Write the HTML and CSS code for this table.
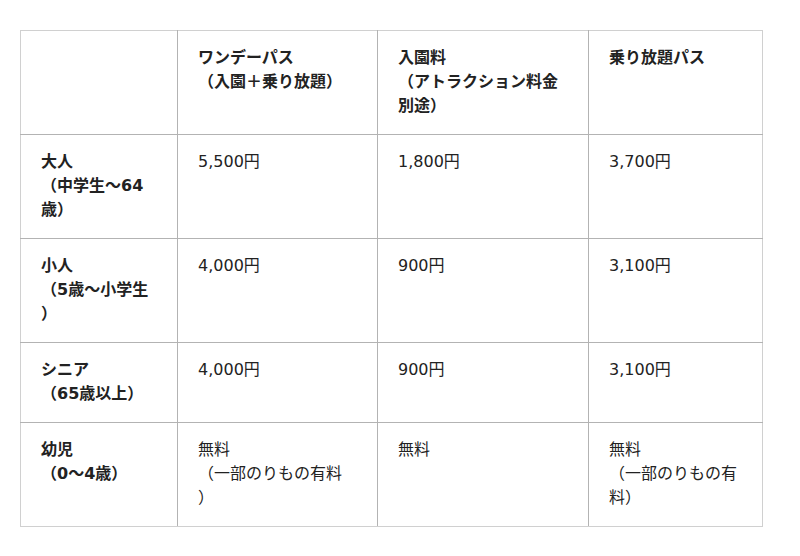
FILE: index.html
```html
<!DOCTYPE html>
<html lang="ja">
<head>
<meta charset="utf-8">
<title>料金表</title>
<link rel="stylesheet" href="styles.css">
</head>
<body>
<div class="page">
<table class="price-table">
  <colgroup>
    <col class="c1"><col class="c2"><col class="c3"><col class="c4">
  </colgroup>
  <thead>
    <tr>
      <th></th>
      <th>ワンデーパス<br>（入園＋乗り放題）</th>
      <th>入園料<br>（アトラクション料金別途）</th>
      <th>乗り放題パス</th>
    </tr>
  </thead>
  <tbody>
    <tr>
      <th>大人<br>（中学生〜64歳）</th>
      <td>5,500円</td>
      <td>1,800円</td>
      <td>3,700円</td>
    </tr>
    <tr>
      <th>小人<br>（5歳〜小学生）</th>
      <td>4,000円</td>
      <td>900円</td>
      <td>3,100円</td>
    </tr>
    <tr>
      <th>シニア<br>（65歳以上）</th>
      <td>4,000円</td>
      <td>900円</td>
      <td>3,100円</td>
    </tr>
    <tr>
      <th>幼児<br>（0〜4歳）</th>
      <td>無料<br>（一部のりもの有料）</td>
      <td>無料</td>
      <td>無料<br>（一部のりもの有料）</td>
    </tr>
  </tbody>
</table>
</div>
</body>
</html>
```

FILE: styles.css
```css
html, body {
  margin: 0;
  padding: 0;
  background: #ffffff;
}
.page {
  padding: 30px 20px;
}
.price-table {
  border-collapse: collapse;
  table-layout: fixed;
  width: 742px;
  font-family: "DejaVu Sans", "Noto Sans CJK JP", sans-serif;
  font-size: 16px;
  line-height: 24px;
  color: #222;
  text-spacing-trim: space-all;
}
.c1 { width: 157px; }
.c2 { width: 200px; }
.c3 { width: 211px; }
.c4 { width: 174px; }
.price-table th,
.price-table td {
  border: 1px solid #b3b3b3;
  padding: 15px 20px 16px;
  vertical-align: top;
  text-align: left;
  line-break: anywhere;
}
.price-table th {
  font-weight: bold;
}
.price-table td {
  font-weight: normal;
}
.price-table tr > :first-child { border-left-color: #d0d0d0; }
.price-table tr > :last-child { border-right-color: #d0d0d0; }
.price-table thead tr > * { border-top-color: #d0d0d0; }
.price-table tbody tr:last-child > * { border-bottom-color: #d0d0d0; }
```
